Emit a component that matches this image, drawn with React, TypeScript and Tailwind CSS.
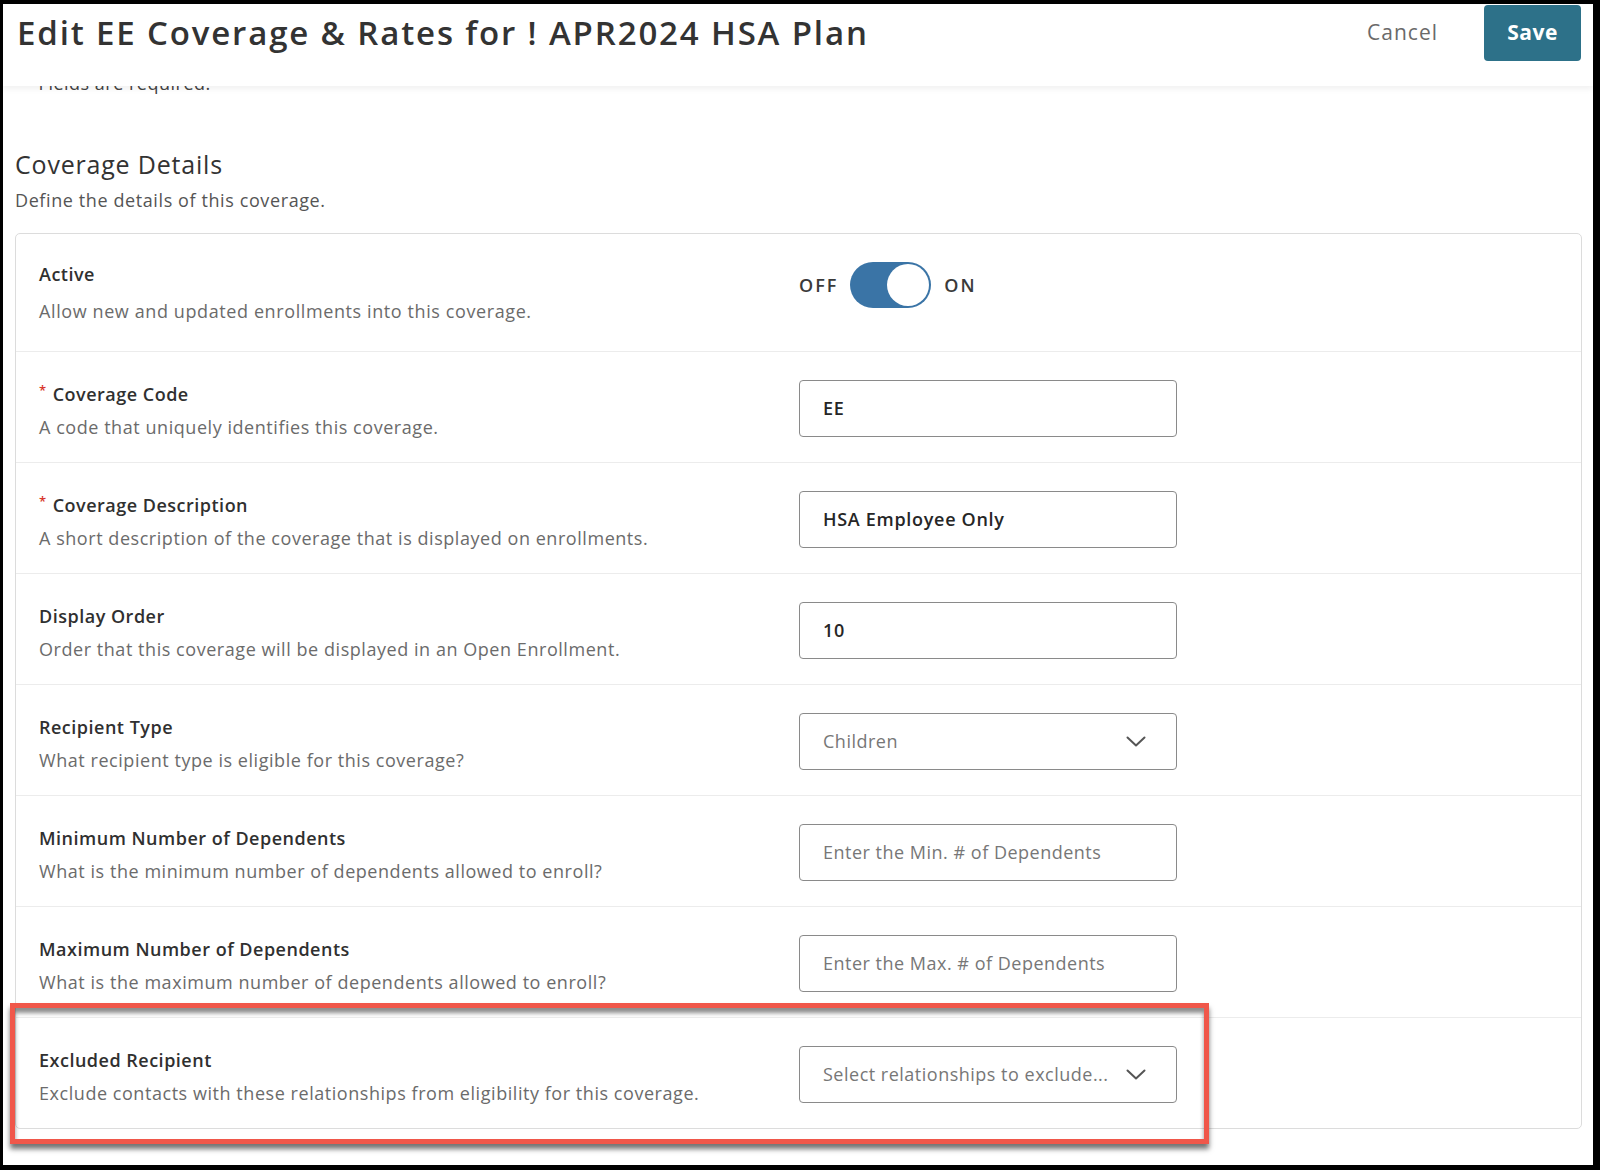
import React from "react";

const font = "font-['Open_Sans','Liberation_Sans',sans-serif]";

function Chevron() {
  return (
    <svg width="20" height="11" viewBox="0 0 20 11" fill="none">
      <path d="M1.5 1.5L10 9.5L18.5 1.5" stroke="#555" strokeWidth="2" strokeLinecap="round" strokeLinejoin="round" />
    </svg>
  );
}

type Field = {
  label: string;
  desc: string;
  required?: boolean;
  kind: "input" | "select";
  value?: string;
  placeholder?: string;
};

const fields: Field[] = [
  { label: "Coverage Code", required: true, desc: "A code that uniquely identifies this coverage.", kind: "input", value: "EE" },
  { label: "Coverage Description", required: true, desc: "A short description of the coverage that is displayed on enrollments.", kind: "input", value: "HSA Employee Only" },
  { label: "Display Order", desc: "Order that this coverage will be displayed in an Open Enrollment.", kind: "input", value: "10" },
  { label: "Recipient Type", desc: "What recipient type is eligible for this coverage?", kind: "select", placeholder: "Children" },
  { label: "Minimum Number of Dependents", desc: "What is the minimum number of dependents allowed to enroll?", kind: "input", placeholder: "Enter the Min. # of Dependents" },
  { label: "Maximum Number of Dependents", desc: "What is the maximum number of dependents allowed to enroll?", kind: "input", placeholder: "Enter the Max. # of Dependents" },
  { label: "Excluded Recipient", desc: "Exclude contacts with these relationships from eligibility for this coverage.", kind: "select", placeholder: "Select relationships to exclude..." },
];

function FieldRow({ f }: { f: Field }) {
  return (
    <div className="grid grid-cols-[760px_378px] h-[111px] px-[23px] border-t border-[#ececec]">
      <div className="pt-[29px]">
        <div className="flex items-start text-[18px] leading-[26px] font-semibold tracking-[0.5px] text-[#303030]">
          {f.required && <span className="text-[#d8362b] text-[13px] leading-[18px] mr-[6px]">*</span>}
          <span>{f.label}</span>
        </div>
        <div className="mt-[7px] text-[18px] leading-[26px] tracking-[0.55px] text-[#6b6b6b]">{f.desc}</div>
      </div>
      <div className="pt-[28px]">
        <div className="h-[57px] w-[378px] border border-[#8a8a8a] rounded-[4px] flex items-center pl-[23px] pr-[30px] justify-between">
          {f.value ? (
            <span className="text-[18px] font-semibold tracking-[0.7px] text-[#262626]">{f.value}</span>
          ) : (
            <span className="text-[18px] tracking-[0.5px] text-[#777777] whitespace-nowrap">{f.placeholder}</span>
          )}
          {f.kind === "select" && <Chevron />}
        </div>
      </div>
    </div>
  );
}

export default function App() {
  return (
    <div className={`w-[1600px] h-[1170px] bg-black pt-[4px] pl-[3px] pr-[7px] pb-[5px] ${font}`}>
      <div className="relative w-full h-full bg-white overflow-hidden">
        {/* Header */}
        <div className="relative z-10 h-[82px] bg-white shadow-[0_3px_6px_rgba(0,0,0,0.06)] pt-[1px] pl-[14px] pr-[12px]">
          <div className="h-[56px] flex items-center justify-between">
            <h1 className="text-[33px] leading-[40px] font-semibold tracking-[1.85px] text-[#333333]">
              Edit EE Coverage &amp; Rates for ! APR2024 HSA Plan
            </h1>
            <div className="flex items-center gap-[46px]">
              <span className="text-[21px] tracking-[1px] text-[#6a6a6a]">Cancel</span>
              <button className="h-[56px] w-[97px] rounded-[4px] bg-[#2d7189] text-white text-[21px] font-bold tracking-[0.5px]">
                Save
              </button>
            </div>
          </div>
        </div>

        {/* Content */}
        <div className="pl-[12px] pr-[11px]">
          <div className="h-[8px] overflow-hidden pl-[8px]">
            <p className="-mt-[15px] text-[18px] leading-[24px] tracking-[0.5px] text-[#444]">
              <span className="text-[#d8362b]">* </span>Fields are required.
            </p>
          </div>
          <h2 className="mt-[55px] text-[25px] leading-[30px] tracking-[0.8px] text-[#333333]">Coverage Details</h2>
          <p className="mt-[9px] text-[18px] leading-[24px] tracking-[0.6px] text-[#555555]">Define the details of this coverage.</p>

          <div className="mt-[21px] border border-[#dcdcdc] rounded-[5px]">
            {/* Active row */}
            <div className="grid grid-cols-[760px_378px] h-[117px] px-[23px]">
              <div className="pt-[27px]">
                <div className="text-[18px] leading-[26px] font-semibold tracking-[0.5px] text-[#303030]">Active</div>
                <div className="mt-[11px] text-[18px] leading-[26px] tracking-[0.6px] text-[#6b6b6b]">
                  Allow new and updated enrollments into this coverage.
                </div>
              </div>
              <div className="pt-[28px] flex items-start">
                <div className="flex items-center h-[46px]">
                  <span className="text-[18px] font-semibold tracking-[2px] text-[#3a3a3a]">OFF</span>
                  <div className="ml-[12px] w-[81px] h-[46px] rounded-full bg-[#3a74a6] flex items-center justify-end pr-[2px]">
                    <div className="w-[42px] h-[42px] rounded-full bg-white" />
                  </div>
                  <span className="ml-[13px] text-[18px] font-semibold tracking-[2px] text-[#3a3a3a]">ON</span>
                </div>
              </div>
            </div>
            {fields.map((f) => (
              <FieldRow key={f.label} f={f} />
            ))}
          </div>
        </div>

        {/* Highlight annotation */}
        <div className="absolute left-[7px] top-[999px] w-[1199px] h-[141px] border-[5px] border-[#f0574a] shadow-[0_5px_5px_rgba(0,0,0,0.55),inset_0_5px_4px_rgba(0,0,0,0.45)]" />
      </div>
    </div>
  );
}
